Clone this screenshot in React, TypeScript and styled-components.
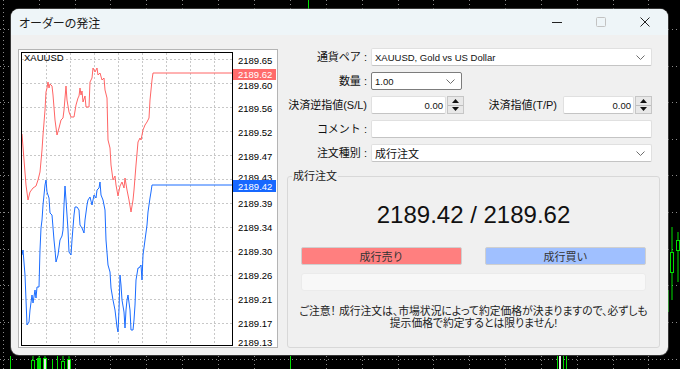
import React from "react";
import styled, { createGlobalStyle } from "styled-components";

const GlobalStyle = createGlobalStyle`
  html, body { margin: 0; padding: 0; background: #000; }
  body { font-family: "Liberation Sans", "Noto Sans CJK JP", sans-serif; }
`;

const FONT = `"Liberation Sans", "Noto Sans CJK JP", sans-serif`;

const Desktop = styled.div`
  position: relative;
  width: 680px;
  height: 369px;
  overflow: hidden;
  background: #000;
`;

const Backdrop = styled.svg`
  position: absolute;
  inset: 0;
`;

const Window = styled.div`
  position: absolute;
  left: 11px;
  top: 9px;
  width: 657px;
  height: 346px;
  border-radius: 8px;
  overflow: hidden;
  background: #f0f0f0;
  display: flex;
  flex-direction: column;
  box-shadow: 0 0 0 1px rgba(90, 90, 90, 0.6);
`;

const TitleBar = styled.div`
  height: 26px;
  flex: none;
  background: #eef5f8;
  display: flex;
  align-items: center;
  padding-left: 8px;
`;

const Title = styled.span`
  font-family: ${FONT};
  font-size: 12px;
  color: #1b1b1b;
  font-feature-settings: "palt";
`;

const Controls = styled.div`
  margin-left: auto;
  margin-right: 1px;
  display: flex;
  height: 100%;
`;

const ControlButton = styled.div`
  width: 44px;
  height: 100%;
  display: flex;
  align-items: center;
  justify-content: center;
`;

const Body = styled.div`
  flex: 1;
  display: flex;
  gap: 9px;
  padding: 13px 8px 7px 7px;
  min-height: 0;
`;

const ChartPanel = styled.svg`
  flex: none;
  margin-top: 1px;
  display: block;
`;

const Side = styled.div`
  flex: 1;
  display: flex;
  flex-direction: column;
  min-width: 0;
`;

const Form = styled.div`
  display: flex;
  flex-direction: column;
  gap: 6px;
  padding-right: 8px;
`;

const Row = styled.div`
  display: flex;
  align-items: center;
  height: 18px;
`;

const Label = styled.div<{ $w?: number; $pr?: number }>`
  width: ${(p) => (p.$w ? `${p.$w}px` : "auto")};
  flex: ${(p) => (p.$w ? "none" : "1")};
  text-align: right;
  padding-right: ${(p) => p.$pr ?? 4}px;
  box-sizing: border-box;
  font-family: ${FONT};
  font-size: 11px;
  line-height: 14px;
  color: #111;
  white-space: nowrap;
`;

const Field = styled.div<{ $w?: number; $focus?: boolean; $right?: boolean }>`
  box-sizing: border-box;
  height: 18px;
  width: ${(p) => (p.$w ? `${p.$w}px` : "auto")};
  flex: ${(p) => (p.$w ? "none" : "1")};
  background: #fff;
  border: 1px solid ${(p) => (p.$focus ? "#7c7c7c" : "#e0e0e0")};
  border-bottom-color: ${(p) => (p.$focus ? "#7c7c7c" : "#c4c4c4")};
  border-radius: 2px;
  display: flex;
  align-items: center;
  justify-content: ${(p) => (p.$right ? "flex-end" : "flex-start")};
  padding: 0 ${(p) => (p.$right ? 2 : 6)}px 0 3px;
  font-family: ${FONT};
  font-size: 9.5px;
  color: #111;
  white-space: nowrap;
`;

const FieldText = styled.span<{ $jp?: boolean }>`
  flex: 1;
  font-size: ${(p) => (p.$jp ? "11px" : "9.5px")};
`;

const Spin = styled.div`
  flex: none;
  box-sizing: border-box;
  width: 17px;
  height: 18px;
  margin-left: 1px;
  border: 1px solid #c6c6c6;
  background: #e8e8e8;
  display: flex;
  flex-direction: column;
`;

const SpinHalf = styled.div<{ $top?: boolean }>`
  flex: 1;
  display: flex;
  align-items: center;
  justify-content: center;
  border-bottom: ${(p) => (p.$top ? "1px solid #bdbdbd" : "none")};
`;

const Group = styled.div`
  position: relative;
  flex: 1;
  margin-top: 14px;
  border: 1px solid #d8d8d8;
  border-radius: 3px;
  padding: 24px 13px 0 13px;
  display: flex;
  flex-direction: column;
  align-items: center;
`;

const Legend = styled.span`
  position: absolute;
  top: -8px;
  left: 4px;
  padding: 0 1px;
  background: #f0f0f0;
  font-family: ${FONT};
  font-size: 11px;
  line-height: 14px;
  color: #222;
`;

const Price = styled.div`
  font-family: "Liberation Sans", sans-serif;
  font-size: 24px;
  line-height: 28px;
  color: #111;
`;

const ButtonRow = styled.div`
  width: 100%;
  display: flex;
  justify-content: space-between;
  margin-top: 18px;
`;

const TradeButton = styled.div<{ $kind: "sell" | "buy" }>`
  box-sizing: border-box;
  width: 161px;
  height: 18px;
  border: 1px solid #cfcfcf;
  border-radius: 2px;
  background: ${(p) => (p.$kind === "sell" ? "#ff7f7f" : "#a0c0ff")};
  display: flex;
  align-items: center;
  justify-content: center;
  font-family: ${FONT};
  font-size: 11px;
  color: #333;
`;

const EmptyBox = styled.div`
  box-sizing: border-box;
  width: 100%;
  height: 18px;
  margin-top: 8px;
  background: #f8f8f8;
  border: 1px solid #ebebeb;
  border-radius: 3px;
`;

const Notice = styled.div`
  margin-top: 14px;
  font-family: ${FONT};
  font-size: 10.8px;
  line-height: 12px;
  color: #222;
  text-align: center;
  font-feature-settings: "palt";
  white-space: nowrap;
`;

const Chevron = () => (
  <svg width="9" height="5" viewBox="0 0 9 5">
    <polyline points="0.5,0.5 4.5,4.5 8.5,0.5" fill="none" stroke="#6e6e6e" strokeWidth="1" />
  </svg>
);

const Tri = ({ up }: { up?: boolean }) => (
  <svg width="7" height="4" viewBox="0 0 7 4">
    <polygon points={up ? "0,4 7,4 3.5,0" : "0,0 7,0 3.5,4"} fill="#111" />
  </svg>
);

const red: [number, number][] = [
  [22,134],[24,160],[26,185],[28,200],[30,192],[33,188],[36,186],[38,180],[40,172],[42,150],[43,135],[45,110],[46,92],[47,88],[48,82],[49,88],[50,84],[52,86],[53,95],[55,120],[57,135],[59,128],[61,120],[63,118],[64,110],[66,86],[67,100],[69,112],[71,117],[74,117],[76,105],[78,98],[79,96],[80,88],[81,95],[82,91],[83,102],[85,96],[86,107],[89,107],[90,82],[92,78],[93,68],[95,72],[97,68],[98,75],[100,73],[102,80],[104,78],[105,90],[107,98],[108,140],[110,148],[111,165],[113,180],[115,176],[116,185],[118,196],[120,186],[122,182],[124,188],[125,178],[127,190],[129,200],[131,212],[133,200],[134,190],[136,165],[138,142],[140,138],[141,140],[143,130],[145,125],[147,122],[149,118],[150,100],[152,80],[153,73],[232,73],
];

const blue: [number, number][] = [
  [22,255],[23,250],[25,275],[26,300],[27,325],[29,322],[30,310],[32,295],[33,303],[35,290],[36,298],[37,287],[39,287],[40,250],[41,228],[42,220],[43,205],[45,185],[46,180],[47,192],[49,198],[50,213],[52,215],[54,240],[55,250],[56,262],[58,255],[60,240],[62,236],[63,230],[64,205],[65,186],[66,200],[68,230],[69,252],[71,255],[72,240],[74,215],[75,207],[77,207],[79,210],[80,225],[82,228],[84,233],[85,220],[87,205],[88,200],[90,197],[92,205],[94,195],[96,198],[97,190],[99,188],[100,182],[101,195],[103,200],[105,210],[106,240],[108,265],[110,272],[111,288],[113,300],[115,310],[117,327],[118,332],[119,310],[120,275],[121,285],[122,300],[124,312],[125,328],[126,310],[127,300],[128,295],[130,310],[131,330],[133,330],[134,320],[135,305],[136,280],[138,268],[139,268],[141,265],[142,280],[143,255],[145,240],[147,225],[148,212],[150,198],[151,192],[152,185],[232,185],
];

const pts = (a: [number, number][]) => a.map(([x, y]) => `${x},${y}`).join(" ");

const axisLabels: [string, number][] = [
  ["2189.65", 60], ["2189.60", 85], ["2189.56", 108], ["2189.52", 132], ["2189.47", 156],
  ["2189.43", 177], ["2189.39", 203], ["2189.34", 227], ["2189.30", 251], ["2189.26", 275],
  ["2189.21", 299], ["2189.17", 323], ["2189.13", 342],
];

const gridY = [59, 83, 107, 131, 155, 179, 203, 227, 251, 275, 299, 323];
const gridX = [46, 70, 94, 118, 142, 166, 190, 214];

const Chart = () => (
  <ChartPanel width="260" height="299" viewBox="18 49 260 299">
    <defs>
      <clipPath id="plot">
        <rect x="22" y="53" width="210" height="292" />
      </clipPath>
    </defs>
    <rect x="18.5" y="49.5" width="259" height="298" fill="#fff" stroke="#b4b4b4" />
    <g stroke="#c8c8c8" strokeDasharray="2 2" strokeWidth="1">
      {gridY.map((y) => (
        <line key={`h${y}`} x1="22" x2="232" y1={y + 0.5} y2={y + 0.5} />
      ))}
      {gridX.map((x) => (
        <line key={`v${x}`} x1={x + 0.5} x2={x + 0.5} y1="53" y2="345" />
      ))}
    </g>
    <g clipPath="url(#plot)" fill="none" strokeWidth="1" strokeLinejoin="round">
      <polyline points={pts(red)} stroke="#ff6464" />
      <polyline points={pts(blue)} stroke="#1a6cff" />
    </g>
    <rect x="21.5" y="52.5" width="211" height="293" fill="none" stroke="#000" />
    <text x="24" y="57" fontFamily="Liberation Sans, sans-serif" fontSize="9.5" fill="#000" dominantBaseline="central">XAUUSD</text>
    <g fontFamily="Liberation Sans, sans-serif" fontSize="9.5" fill="#000">
      {axisLabels.map(([t, y]) => (
        <text key={t} x="238" y={y} dominantBaseline="central">{t}</text>
      ))}
    </g>
    <rect x="233" y="69" width="43" height="11" fill="#ff6b6b" />
    <text x="238" y="74.5" fontFamily="Liberation Sans, sans-serif" fontSize="9.5" fill="#fff" dominantBaseline="central">2189.62</text>
    <rect x="233" y="180" width="43" height="12" fill="#1768ff" />
    <text x="238" y="186" fontFamily="Liberation Sans, sans-serif" fontSize="9.5" fill="#fff" dominantBaseline="central">2189.42</text>
  </ChartPanel>
);

const bgX = [3, 39, 75, 110, 146, 182, 218, 254, 290, 326, 362, 398, 433, 469, 505, 541, 577, 613, 648];
const bgY = [29, 66, 102, 139, 175, 212, 249, 285, 322, 359];

const Candle = ({ x, top, bottom, bTop, bBot, fill }: { x: number; top: number; bottom: number; bTop: number; bBot: number; fill: string }) => (
  <g>
    <line x1={x + 2} x2={x + 2} y1={top} y2={bottom} stroke="#00e000" />
    <rect x={x + 0.5} y={bTop + 0.5} width="3" height={bBot - bTop} fill={fill} stroke="#00e000" />
  </g>
);

const BackChart = () => (
  <Backdrop width="680" height="369" viewBox="0 0 680 369">
    <g stroke="#8a8a8a" strokeDasharray="1 3" strokeWidth="1">
      {bgX.map((x) => (
        <line key={`bx${x}`} x1={x + 0.5} x2={x + 0.5} y1="0" y2="369" />
      ))}
      {bgY.map((y) => (
        <line key={`by${y}`} x1="0" x2="680" y1={y + 0.5} y2={y + 0.5} />
      ))}
    </g>
    <line x1="308.5" x2="308.5" y1="0" y2="10" stroke="#00e000" />
    <line x1="10.5" x2="10.5" y1="356" y2="369" stroke="#00e000" />
    <Candle x={31} top={356} bottom={369} bTop={360} bBot={369} fill="#000" />
    <Candle x={37} top={356} bottom={369} bTop={358} bBot={369} fill="#00e000" />
    <Candle x={43} top={356} bottom={369} bTop={358} bBot={369} fill="#e8e8e8" />
    <line x1="52.5" x2="52.5" y1="360" y2="369" stroke="#00e000" />
    <line x1="57.5" x2="57.5" y1="356" y2="369" stroke="#00e000" />
    <Candle x={61} top={356} bottom={369} bTop={361} bBot={369} fill="#000" />
    <Candle x={67} top={356} bottom={369} bTop={359} bBot={369} fill="#e8e8e8" />
    <line x1="290.5" x2="290.5" y1="356" y2="369" stroke="#00e000" />
    <line x1="557.5" x2="557.5" y1="356" y2="369" stroke="#00e000" />
    <rect x="559" y="356" width="2" height="13" fill="#e8e8e8" />
    <line x1="563.5" x2="563.5" y1="356" y2="369" stroke="#00e000" />
    <line x1="566.5" x2="566.5" y1="356" y2="369" stroke="#00e000" />
    <Candle x={670} top={227} bottom={300} bTop={252} bBot={272} fill="#000" />
    <Candle x={676} top={232} bottom={282} bTop={240} bBot={250} fill="#000" />
    <line x1="668.5" x2="668.5" y1="290" y2="312" stroke="#00e000" />
  </Backdrop>
);

export default function App() {
  return (
    <Desktop>
      <GlobalStyle />
      <BackChart />
      <Window>
        <TitleBar>
          <Title>オーダーの発注</Title>
          <Controls>
            <ControlButton>
              <svg width="10" height="10" viewBox="0 0 10 10">
                <line x1="0" x2="10" y1="5.5" y2="5.5" stroke="#222" strokeWidth="1" />
              </svg>
            </ControlButton>
            <ControlButton>
              <svg width="10" height="10" viewBox="0 0 10 10">
                <rect x="0.5" y="0.5" width="9" height="9" rx="1" fill="none" stroke="#c2c2c2" strokeWidth="1" />
              </svg>
            </ControlButton>
            <ControlButton>
              <svg width="10" height="10" viewBox="0 0 10 10">
                <path d="M0.5 0.5 L9.5 9.5 M9.5 0.5 L0.5 9.5" stroke="#222" strokeWidth="1" />
              </svg>
            </ControlButton>
          </Controls>
        </TitleBar>
        <Body>
          <Chart />
          <Side>
            <Form>
              <Row>
                <Label $w={84}>通貨ペア :</Label>
                <Field>
                  <FieldText>XAUUSD, Gold vs US Dollar</FieldText>
                  <Chevron />
                </Field>
              </Row>
              <Row>
                <Label $w={84}>数量 :</Label>
                <Field $w={91} $focus>
                  <FieldText>1.00</FieldText>
                  <Chevron />
                </Field>
              </Row>
              <Row>
                <Label $w={84}>決済逆指値(S/L)</Label>
                <Field $w={75} $right>0.00</Field>
                <Spin>
                  <SpinHalf $top><Tri up /></SpinHalf>
                  <SpinHalf><Tri /></SpinHalf>
                </Spin>
                <Label $pr={6}>決済指値(T/P)</Label>
                <Field $w={71} $right>0.00</Field>
                <Spin>
                  <SpinHalf $top><Tri up /></SpinHalf>
                  <SpinHalf><Tri /></SpinHalf>
                </Spin>
              </Row>
              <Row>
                <Label $w={84}>コメント :</Label>
                <Field />
              </Row>
              <Row>
                <Label $w={84}>注文種別 :</Label>
                <Field>
                  <FieldText $jp>成行注文</FieldText>
                  <Chevron />
                </Field>
              </Row>
            </Form>
            <Group>
              <Legend>成行注文</Legend>
              <Price>2189.42 / 2189.62</Price>
              <ButtonRow>
                <TradeButton $kind="sell">成行売り</TradeButton>
                <TradeButton $kind="buy">成行買い</TradeButton>
              </ButtonRow>
              <EmptyBox />
              <Notice>
                ご注意！ 成行注文は、市場状況によって約定価格が決まりますので、必ずしも
                <br />
                提示価格で約定するとは限りません!
              </Notice>
            </Group>
          </Side>
        </Body>
      </Window>
    </Desktop>
  );
}
